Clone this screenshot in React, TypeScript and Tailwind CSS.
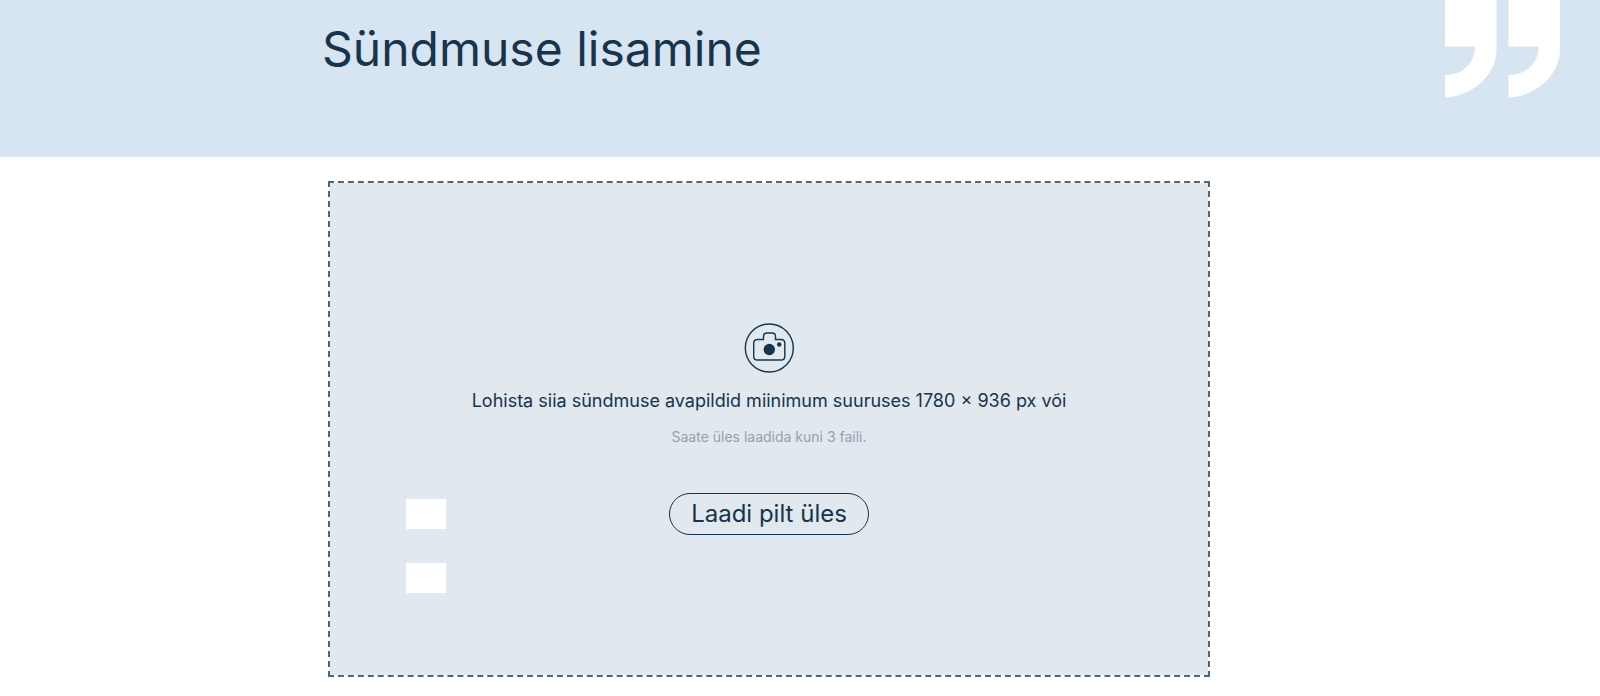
import React from 'react';

const QuoteMark: React.FC = () => (
  <svg viewBox="0 0 115 98" className="h-[98px] w-[115px] shrink-0 fill-white" aria-hidden="true">
    <path d="M0 0H51.5V50C51.5 76 26 96.500 0 97.500V75C17 75 30 64 30 46.500H0Z" />
    <path d="M63.500 0H115V50C115 76 89.500 96.500 63.500 97.500V75C80.500 75 93.500 64 93.500 46.500H63.500Z" />
  </svg>
);

const CameraIcon: React.FC = () => (
  <svg viewBox="0 0 50 50" className="size-[50px]" fill="none" stroke="#17344d" strokeWidth="1.4" aria-hidden="true">
    <circle cx="25.300" cy="25" r="24" />
    <path d="M13 16.500H19.500V13.500Q19.500 10 23 10H28Q31.500 10 31.500 13.500V16.500H37Q40.800 16.500 40.800 20.300V33.200Q40.800 37 37 37H13.500Q9.700 37 9.700 33.200V20.300Q9.700 16.500 13.500 16.500Z" />
    <circle cx="25.300" cy="26.500" r="5.700" fill="#17344d" stroke="none" />
    <circle cx="35.200" cy="21.500" r="2.200" fill="#17344d" stroke="none" />
  </svg>
);

const placeholders = ['first', 'second'];

export default function App() {
  return (
    <div className="min-h-screen bg-white font-['Inter',sans-serif] text-[#17344d]">
      <header className="flex items-start justify-between bg-[#d7e4f1] pr-10 pb-[59px] pl-[322px]">
        <h1 className="pt-[25px] text-[48px] leading-[48px]">Sündmuse lisamine</h1>
        <QuoteMark />
      </header>

      <main className="pt-6 pr-[390px] pb-5 pl-[328px]">
        <section className="flex flex-col items-center border-2 border-dashed border-[#536579] bg-[#e1e8ee] bg-clip-padding pt-[140px] pb-[82px]">
          <CameraIcon />
          <p className="mt-4 text-[18px] leading-6">
            Lohista siia sündmuse avapildid miinimum suuruses 1780 × 936 px või
          </p>
          <p className="mt-4 text-[14px] leading-4 text-[#94a2b0]">Saate üles laadida kuni 3 faili.</p>

          <div className="mt-12 grid w-full grid-cols-[1fr_auto_1fr] items-start">
            <div className="flex flex-col gap-[34px] pt-[6px] pl-[76px]">
              {placeholders.map((p) => (
                <div key={p} className="h-[30px] w-10 bg-white" />
              ))}
            </div>
            <button
              type="button"
              className="h-[42px] rounded-full border border-[#17344d] px-[21px] text-[24px] leading-6"
            >
              Laadi pilt üles
            </button>
          </div>
        </section>
      </main>
    </div>
  );
}
